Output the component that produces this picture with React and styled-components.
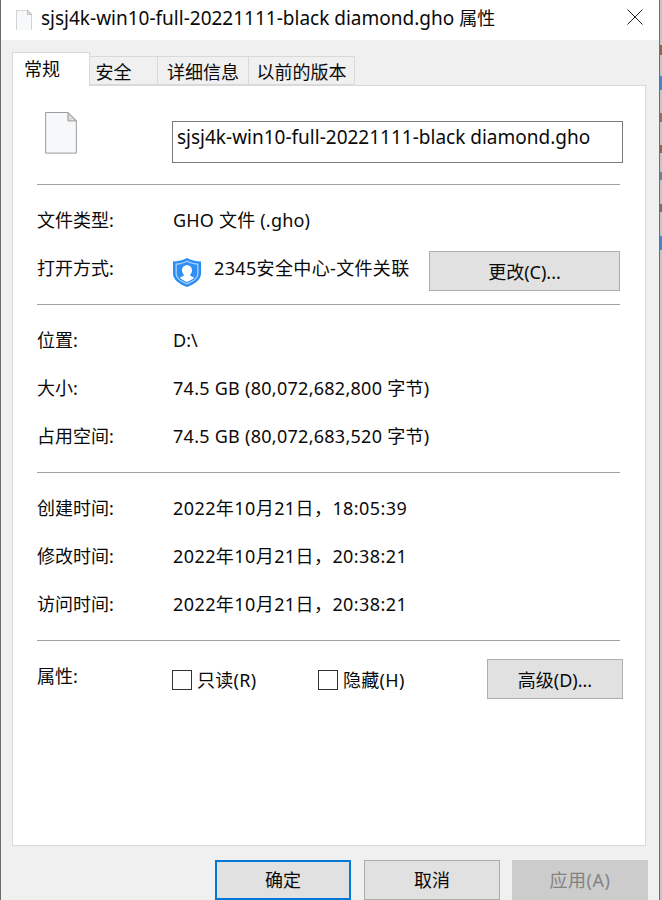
import React from "react";
import styled, { createGlobalStyle } from "styled-components";

const GlobalStyle = createGlobalStyle`
  html, body {
    margin: 0;
    padding: 0;
    background: #f0f0f0;
  }
  * {
    box-sizing: border-box;
  }
`;

const fontStack = `"Noto Sans", "Noto Sans CJK SC", sans-serif`;

const Page = styled.div`
  width: 662px;
  height: 900px;
  display: flex;
  overflow: hidden;
  background: #fff;
  font-family: ${fontStack};
  font-size: 18px;
  color: #0a0a0a;
`;

const Window = styled.div`
  width: 660px;
  height: 900px;
  flex: none;
  display: flex;
  flex-direction: column;
  background: #f0f0f0;
  border-left: 1px solid #6b6b6b;
  border-right: 1px solid #6f6f6f;
`;

const TitleBar = styled.div`
  height: 40px;
  flex: none;
  display: flex;
  align-items: center;
  background: #fff;
  padding: 0 16px 0 15px;
`;

const TitleText = styled.div`
  flex: 1;
  margin: -4px 0 0 9px;
  font-size: 19px;
  line-height: 36px;
  white-space: nowrap;
`;

const TitleSuffix = styled.span`
  font-size: 18px;
`;

const Body = styled.div`
  flex: 1;
  display: flex;
  flex-direction: column;
  padding: 12px 13px 0 11px;
`;

const TabRow = styled.div`
  height: 33px;
  flex: none;
  display: flex;
  align-items: flex-end;
  position: relative;
  z-index: 1;
`;

const Tab = styled.div`
  width: ${(p) => p.$w}px;
  height: ${(p) => (p.$active ? 34 : 29)}px;
  margin-bottom: ${(p) => (p.$active ? -1 : 0)}px;
  padding: 0 ${(p) => p.$right || 0}px ${(p) => (p.$active ? 3 : 0)}px 0;
  display: flex;
  align-items: center;
  justify-content: center;
  background: ${(p) => (p.$active ? "#fff" : "#f0f0f0")};
  border: 1px solid #d9d9d9;
  border-bottom: ${(p) => (p.$active ? "none" : "1px solid #d9d9d9")};
  border-left: ${(p) => (p.$active ? "1px solid #d9d9d9" : "none")};
  white-space: nowrap;
`;

const Panel = styled.div`
  width: 634px;
  height: 761px;
  flex: none;
  display: flex;
  flex-direction: column;
  background: #fff;
  border: 1px solid #d9d9d9;
  padding: 0 25px 0 24px;
`;

const NameRow = styled.div`
  height: 98px;
  flex: none;
  display: flex;
  align-items: flex-start;
  padding: 26px 0 0 8px;
`;

const NameBox = styled.div`
  width: 451px;
  height: 42px;
  flex: none;
  margin: 9px 0 0 95px;
  border: 1px solid #7a7a7a;
  padding-left: 4px;
  font-size: 19px;
  line-height: 30px;
  white-space: nowrap;
`;

const Divider = styled.div`
  height: 1px;
  flex: none;
  background: #a0a0a0;
`;

const Section = styled.div`
  height: ${(p) => p.$h}px;
  flex: none;
  display: flex;
  flex-direction: column;
  gap: 6px;
  padding-top: ${(p) => p.$top}px;
`;

const Row = styled.div`
  height: ${(p) => p.$h || 42}px;
  flex: none;
  display: flex;
  align-items: ${(p) => (p.$center ? "center" : "flex-start")};
`;

const Label = styled.div`
  width: ${(p) => p.$w || 136}px;
  flex: none;
  line-height: 30px;
  margin-top: ${(p) => p.$lift || 0}px;
`;

const Value = styled.div`
  line-height: 30px;
  white-space: nowrap;
  letter-spacing: ${(p) => p.$track || 0}px;
`;

const AppName = styled(Value)`
  width: 215px;
  margin: -10px 0 0 13px;
`;

const GreyButton = styled.div`
  width: ${(p) => p.$w || 136}px;
  height: ${(p) => p.$h || 40}px;
  flex: none;
  display: flex;
  align-items: center;
  justify-content: center;
  margin-right: ${(p) => p.$pull || 0}px;
  margin-top: ${(p) => p.$lift || 0}px;
  background: ${(p) => (p.$disabled ? "#cccccc" : "#e1e1e1")};
  border: 1px solid ${(p) => (p.$disabled ? "#cccccc" : "#adadad")};
  color: ${(p) => (p.$disabled ? "#838383" : "#0a0a0a")};
  letter-spacing: ${(p) => p.$track || 0}px;
  ${(p) => p.$primary && "border: 2px solid #0078d7;"}
`;

const CheckItem = styled.label`
  display: flex;
  align-items: center;
  gap: 5px;
  width: ${(p) => p.$w}px;
  margin-top: 2px;
  line-height: 30px;
  letter-spacing: 0.3px;
`;

const CheckBox = styled.span`
  width: 20px;
  height: 20px;
  flex: none;
  border: 1px solid #333;
  background: #fff;
`;

const Footer = styled.div`
  flex: 1;
  display: flex;
  gap: 13px;
  padding: 14px 0 0 203px;

  ${GreyButton} {
    padding-bottom: 2px;
  }
`;

const DesktopEdge = styled.svg`
  width: 2px;
  height: 900px;
  flex: none;
`;

const FileIcon = ({ size = 20 }) => (
  <svg width={size} height={size * 1.3} viewBox="0 0 32 42" style={{ flex: "none" }}>
    <path d="M.5.5H23L31.5 9V41.5H.5Z" fill="#f7f8fa" stroke="#9a9a9a" />
    <path d="M23 .5V9H31.5Z" fill="#dcdcdc" stroke="#9a9a9a" />
  </svg>
);

const ShieldIcon = () => (
  <svg width="28" height="29" viewBox="0 0 28 30" preserveAspectRatio="none" style={{ flex: "none", marginTop: -2 }}>
    <path d="M14 0C18 2.5 23 3.5 28 3.5V16C28 23 21 27 14 30C7 27 0 23 0 16V3.5C5 3.5 10 2.5 14 0Z" fill="#2b8cf2" />
    <path d="M14 2.5C17.5 4.5 21.5 5.5 25.5 5.8V16C25.5 21.5 19.5 25 14 27.5C8.5 25 2.5 21.5 2.5 16V5.8C6.5 5.5 10.5 4.5 14 2.5Z" fill="#a9d3ff" />
    <path d="M14 4C17.5 6 21 6.8 24.2 7V16C24.2 21 19 24 14 26.2C9 24 3.8 21 3.8 16V7C7 6.8 10.5 6 14 4Z" fill="#2f8ff3" />
    <path d="M14 7.5C17.2 7.5 19 9.8 19 12.8C19 15 18 16.5 17 17.5C17.2 18.6 19 19.2 21.2 20.2C19.3 22.3 16.6 23.8 14 24.8C11.4 23.8 8.7 22.3 6.8 20.2C9 19.2 10.8 18.6 11 17.5C10 16.5 9 15 9 12.8C9 9.8 10.8 7.5 14 7.5Z" fill="#fff" />
  </svg>
);

const CloseIcon = () => (
  <svg width="16" height="16" viewBox="0 0 16 16" style={{ flex: "none", marginTop: -7 }}>
    <path d="M.5.5L15.5 15.5M15.5.5L.5 15.5" stroke="#222" strokeWidth="1" fill="none" />
  </svg>
);

// what shows of the desktop behind the window
const edgeMarks = [
  [45, 10, "#8a6a55"],
  [76, 14, "#4a86c5"],
  [113, 9, "#8a7560"],
  [145, 8, "#8a6a55"],
  [172, 8, "#6f7f95"],
  [204, 8, "#7a6a70"],
  [236, 14, "#4a86c5"],
];

export default function App() {
  return (
    <Page>
      <GlobalStyle />
      <Window>
        <TitleBar>
          <FileIcon size={16} />
          <TitleText>
            sjsj4k-win10-full-20221111-black diamond.gho <TitleSuffix>属性</TitleSuffix>
          </TitleText>
          <CloseIcon />
        </TitleBar>
        <Body>
          <TabRow>
            <Tab $w={78} $active $right={18}>常规</Tab>
            <Tab $w={68} $right={20}>安全</Tab>
            <Tab $w={91}>详细信息</Tab>
            <Tab $w={106}>以前的版本</Tab>
          </TabRow>
          <Panel>
            <NameRow>
              <FileIcon size={32} />
              <NameBox>sjsj4k-win10-full-20221111-black diamond.gho</NameBox>
            </NameRow>
            <Divider />
            <Section $h={119} $top={20}>
              <Row $h={42}>
                <Label>文件类型:</Label>
                <Value $track={0.2}>GHO 文件 (.gho)</Value>
              </Row>
              <Row $h={40} $center>
                <Label $lift={-10}>打开方式:</Label>
                <ShieldIcon />
                <AppName $track={0.35}>2345安全中心-文件关联</AppName>
                <GreyButton $w={191} $lift={-5}>更改(C)...</GreyButton>
              </Row>
            </Section>
            <Divider />
            <Section $h={167} $top={20}>
              <Row>
                <Label>位置:</Label>
                <Value>D:\</Value>
              </Row>
              <Row>
                <Label>大小:</Label>
                <Value $track={0.27}>74.5 GB (80,072,682,800 字节)</Value>
              </Row>
              <Row>
                <Label>占用空间:</Label>
                <Value $track={0.27}>74.5 GB (80,072,683,520 字节)</Value>
              </Row>
            </Section>
            <Divider />
            <Section $h={167} $top={20}>
              <Row>
                <Label>创建时间:</Label>
                <Value $track={0.42}>2022年10月21日，18:05:39</Value>
              </Row>
              <Row>
                <Label>修改时间:</Label>
                <Value $track={0.42}>2022年10月21日，20:38:21</Value>
              </Row>
              <Row>
                <Label>访问时间:</Label>
                <Value $track={0.42}>2022年10月21日，20:38:21</Value>
              </Row>
            </Section>
            <Divider />
            <Section $h={70} $top={18}>
              <Row $h={40} $center>
                <Label $w={135} $lift={-6}>属性:</Label>
                <CheckItem $w={146}><CheckBox />只读(R)</CheckItem>
                <CheckItem $w={169}><CheckBox />隐藏(H)</CheckItem>
                <GreyButton $pull={-3}>高级(D)...</GreyButton>
              </Row>
            </Section>
          </Panel>
          <Footer>
            <GreyButton $primary>确定</GreyButton>
            <GreyButton $pull={-1}>取消</GreyButton>
            <GreyButton $disabled $track={0.5}>应用(A)</GreyButton>
          </Footer>
        </Body>
      </Window>
      <DesktopEdge viewBox="0 0 2 900">
        <rect width="2" height="900" fill="#c6c6c6" />
        {edgeMarks.map(([y, h, c]) => (
          <rect key={y} y={y} width="2" height={h} fill={c} />
        ))}
      </DesktopEdge>
    </Page>
  );
}
